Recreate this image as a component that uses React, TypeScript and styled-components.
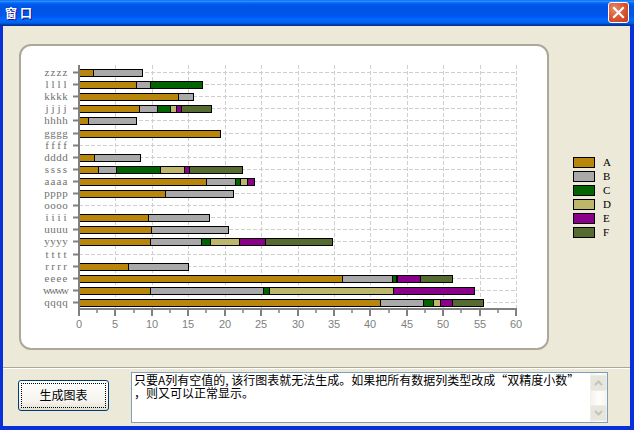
import React from "react";
import styled, { createGlobalStyle } from "styled-components";

const GlobalStyle = createGlobalStyle`
  html, body {
    margin: 0;
    padding: 0;
    overflow: hidden;
  }
`;

const cjk = `"Noto Sans CJK SC", "Liberation Sans", sans-serif`;

const Window = styled.div`
  display: flex;
  flex-direction: column;
  width: 634px;
  height: 430px;
  box-sizing: border-box;
  background: #0831d9;
  font-family: ${cjk};
`;

const TitleBar = styled.header`
  display: flex;
  align-items: center;
  justify-content: space-between;
  flex: 0 0 26px;
  padding: 0 5px 0 5px;
  background: linear-gradient(
    180deg,
    #0058ee 0%,
    #3593ff 4%,
    #288eff 6%,
    #127dff 8%,
    #036ffc 10%,
    #0262ee 14%,
    #0057e5 20%,
    #0054e3 24%,
    #0055eb 56%,
    #005bf5 66%,
    #026afe 76%,
    #0062ef 86%,
    #0052d6 92%,
    #0040ab 94%,
    #003092 100%
  );
`;

const TitleText = styled.span`
  color: #fff;
  font-size: 12px;
  font-weight: 700;
  letter-spacing: 3px;
  line-height: 14px;
  text-shadow: 1px 1px 0 #0f1089;
`;

const CloseButton = styled.button`
  display: flex;
  align-items: center;
  justify-content: center;
  width: 21px;
  height: 21px;
  margin-top: -1px;
  padding: 0;
  border: 1px solid #fff;
  border-radius: 3px;
  background: radial-gradient(circle at 30% 30%, #e98a6c 0%, #db5a37 45%, #c4381b 100%);
`;

const Body = styled.main`
  display: flex;
  flex-direction: column;
  flex: 1;
  margin: 0 4px 4px 3px;
  background: #ece9d8;
`;

const ChartArea = styled.section`
  display: flex;
  align-items: center;
  flex: 0 0 341px;
  box-sizing: border-box;
  padding: 18px 0 17px 16px;
`;

const ChartPanel = styled.div`
  flex: 0 0 530px;
  height: 306px;
  box-sizing: border-box;
  border: 2px solid #aca899;
  border-radius: 12px;
  background: #fff;
  overflow: hidden;
`;

const ChartSvg = styled.svg`
  display: block;
  margin: -2px;
`;

const Legend = styled.ul`
  display: flex;
  flex-direction: column;
  gap: 4px;
  margin: 0 0 0 24px;
  padding: 0;
  list-style: none;
`;

const LegendItem = styled.li`
  display: flex;
  align-items: center;
  gap: 8px;
  height: 10px;
  font-family: "Liberation Serif", serif;
  font-size: 11px;
  color: #000;
`;

const Swatch = styled.span<{ $color: string }>`
  width: 22px;
  height: 11px;
  box-sizing: border-box;
  border: 1px solid #000;
  background: ${({ $color }) => $color};
`;

const Footer = styled.footer`
  display: flex;
  align-items: flex-start;
  flex: 1;
  gap: 22px;
  padding: 4px 22px 0 15px;
  border-top: 1px solid #aca899;
  box-shadow: inset 0 1px 0 #fff;
`;

const GenerateButton = styled.button`
  flex: 0 0 91px;
  height: 31px;
  margin-top: 8px;
  padding: 0 0 3px;
  border: 1px solid #003c74;
  border-radius: 3px;
  outline: 1px dotted #000;
  outline-offset: -4px;
  background: linear-gradient(180deg, #fff 0%, #f5f4ee 70%, #e3e0d2 100%);
  font-family: ${cjk};
  font-size: 12px;
  color: #000;
`;

const NoteBox = styled.div`
  display: flex;
  flex: 1;
  height: 51px;
  box-sizing: border-box;
  border: 1px solid #7f9db9;
  background: #fff;
`;

const NoteText = styled.p`
  flex: 1;
  margin: 0;
  padding: 0 2px;
  font-size: 12px;
  line-height: 13px;
  color: #000;
`;

const Scrollbar = styled.div`
  display: flex;
  flex-direction: column;
  flex: 0 0 17px;
  box-sizing: border-box;
  padding: 2px 0 1px;
  background: linear-gradient(90deg, #f3f1ec 0%, #fdfdfa 50%, #f6f4ef 100%);
`;

const ScrollTrack = styled.div`
  flex: 1;
`;

const ScrollButton = styled.div`
  display: flex;
  align-items: center;
  justify-content: center;
  height: 16px;
  box-sizing: border-box;
  border: 1px solid #eeede5;
  border-radius: 2px;
  background: #e6e6dc;
`;

const colors = ["#b8860b", "#a9a9a9", "#006400", "#bdb76b", "#8b008b", "#556b2f"];
const legendNames = ["A", "B", "C", "D", "E", "F"];

const left = 79;
const right = 516;
const axisY = 309;
const firstRow = 72;
const rowGap = 12.1;
const unit = (right - left) / 60;

// segment ends read off the picture, in page pixels
const rows: [string, number[]][] = [
  ["zzzz", [93, 142]],
  ["llll", [136, 150, 202]],
  ["kkkk", [178, 193]],
  ["jjjj", [139, 157, 170, 176, 181, 211]],
  ["hhhh", [88, 136]],
  ["gggg", [220]],
  ["ffff", []],
  ["dddd", [94, 140]],
  ["ssss", [98, 116, 160, 184, 189, 242]],
  ["aaaa", [206, 235, 240, 247, 254]],
  ["pppp", [165, 233]],
  ["oooo", []],
  ["iiii", [148, 209]],
  ["uuuu", [151, 228]],
  ["yyyy", [150, 201, 210, 239, 265, 332]],
  ["tttt", []],
  ["rrrr", [128, 188]],
  ["eeee", [342, 392, 396, 397, 420, 452]],
  ["wwww", [150, 263, 269, 393, 474]],
  ["qqqq", [380, 423, 433, 440, 452, 483]],
];

const rowY = (i: number) => Math.round(firstRow + i * rowGap);

const Chart: React.FC = () => {
  const ticks = Array.from({ length: 25 }, (_, i) => i * 2.5);
  return (
    <ChartSvg width={530} height={306} viewBox="19 44 530 306">
      {ticks.filter((t) => t % 5 === 0 && t > 0).map((t) => {
        const x = Math.round(left + t * unit) + 0.5;
        return <line key={t} x1={x} x2={x} y1={65} y2={axisY} stroke="#cfcfcf" strokeDasharray="4 2" />;
      })}
      {rows.map(([name], i) => (
        <line key={name} x1={left} x2={right} y1={rowY(i) + 0.5} y2={rowY(i) + 0.5} stroke="#cfcfcf" strokeDasharray="4 2" />
      ))}
      {rows.map(([name, ends], i) => (
        <g key={name}>
          <line x1={73} x2={79} y1={rowY(i) + 0.5} y2={rowY(i) + 0.5} stroke="#808080" strokeWidth={2} />
          <text
            x="47 53 59 65"
            y={rowY(i) + 3.5}
            textAnchor="middle"
            fontFamily="Liberation Serif, serif"
            fontSize={11}
            fill="#707070"
          >
            {name}
          </text>
          {ends.map((end, j) => {
            const start = j === 0 ? left : ends[j - 1];
            return (
              <rect
                key={j}
                x={start + 0.5}
                y={rowY(i) - 3}
                width={end - start}
                height={7}
                fill={colors[j]}
                stroke="#000"
                shapeRendering="crispEdges"
              />
            );
          })}
        </g>
      ))}
      <line x1={79} x2={79} y1={65} y2={axisY + 1} stroke="#808080" strokeWidth={2} />
      <line x1={78} x2={517} y1={axisY} y2={axisY} stroke="#808080" strokeWidth={2} />
      {ticks.map((t) => {
        const x = Math.round(left + t * unit);
        const major = t % 5 === 0;
        return (
          <g key={t}>
            <line x1={x} x2={x} y1={axisY} y2={major ? 316 : 313} stroke="#808080" strokeWidth={major ? 2 : 1.5} />
            {major && (
              <text x={x} y={328} textAnchor="middle" fontFamily="Liberation Sans, sans-serif" fontSize={11} fill="#808080">
                {t}
              </text>
            )}
          </g>
        );
      })}
    </ChartSvg>
  );
};

const App: React.FC = () => {
  return (
    <Window>
      <GlobalStyle />
      <TitleBar>
        <TitleText>窗口</TitleText>
        <CloseButton aria-label="关闭">
          <svg width="13" height="13" viewBox="0 0 13 13">
            <path d="M2 2 L11 11 M11 2 L2 11" stroke="#fff" strokeWidth="2.2" strokeLinecap="square" />
          </svg>
        </CloseButton>
      </TitleBar>
      <Body>
        <ChartArea>
          <ChartPanel>
            <Chart />
          </ChartPanel>
          <Legend>
            {legendNames.map((name, i) => (
              <LegendItem key={name}>
                <Swatch $color={colors[i]} />
                {name}
              </LegendItem>
            ))}
          </Legend>
        </ChartArea>
        <Footer>
          <GenerateButton>生成图表</GenerateButton>
          <NoteBox>
            <NoteText>
              只要A列有空值的, 该行图表就无法生成。如果把所有数据列类型改成“双精度小数”
              <br />
              ，则又可以正常显示。
            </NoteText>
            <Scrollbar>
              <ScrollButton>
                <svg width="9" height="6" viewBox="0 0 9 6">
                  <path d="M1 5 L4.5 1.5 L8 5" fill="none" stroke="#c4c4b8" strokeWidth="2" />
                </svg>
              </ScrollButton>
              <ScrollTrack />
              <ScrollButton>
                <svg width="9" height="6" viewBox="0 0 9 6">
                  <path d="M1 1 L4.5 4.5 L8 1" fill="none" stroke="#c4c4b8" strokeWidth="2" />
                </svg>
              </ScrollButton>
            </Scrollbar>
          </NoteBox>
        </Footer>
      </Body>
    </Window>
  );
};

export default App;
